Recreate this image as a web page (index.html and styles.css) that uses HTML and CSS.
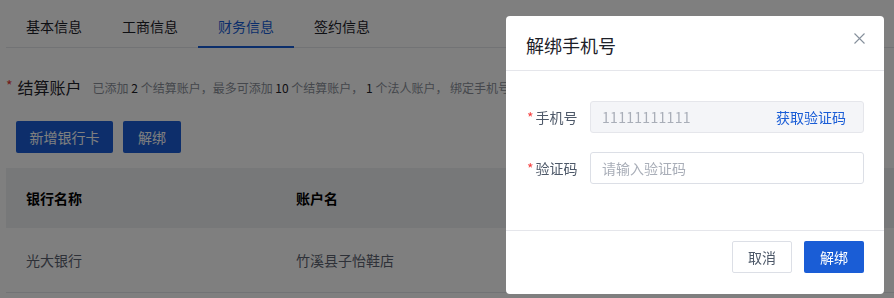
FILE: index.html
```html
<!DOCTYPE html>
<html lang="zh-CN">
<head>
<meta charset="utf-8">
<title>解绑手机号</title>
<link rel="stylesheet" href="styles.css">
</head>
<body>
<div class="page">
  <div class="tabs">
    <div class="tab">基本信息</div>
    <div class="tab">工商信息</div>
    <div class="tab active">财务信息</div>
    <div class="tab">签约信息</div>
  </div>
  <div class="section-title">
    <span class="req">*</span>
    <span class="title">结算账户</span>
    <span class="hint">已添加 <b>2</b> 个结算账户，最多可添加 <b>10</b> 个结算账户， <b>1</b> 个法人账户， 绑定手机号</span>
  </div>
  <div class="actions">
    <button class="btn primary wide">新增银行卡</button>
    <button class="btn primary narrow">解绑</button>
  </div>
  <div class="table">
    <div class="thead">
      <div class="cell">银行名称</div>
      <div class="cell">账户名</div>
      <div class="cell">开户</div>
    </div>
    <div class="trow">
      <div class="cell">光大银行</div>
      <div class="cell">竹溪县子怡鞋店</div>
      <div class="cell"></div>
    </div>
  </div>
</div>
<div class="mask"></div>
<div class="modal">
  <div class="modal-header">
    <span class="modal-title">解绑手机号</span>
    <span class="close">
      <svg width="11" height="11" viewBox="0 0 11 11"><path d="M0.5 0.5L10.5 10.5M10.5 0.5L0.5 10.5" stroke="#86909c" stroke-width="1.1" fill="none"/></svg>
    </span>
  </div>
  <div class="modal-body">
    <div class="form-row">
      <label class="label"><span class="req">*</span>手机号</label>
      <div class="input disabled">
        <span class="value">11111111111</span>
        <span class="link">获取验证码</span>
      </div>
    </div>
    <div class="form-row">
      <label class="label"><span class="req">*</span>验证码</label>
      <div class="input">
        <span class="placeholder">请输入验证码</span>
      </div>
    </div>
  </div>
  <div class="modal-footer">
    <button class="btn default">取消</button>
    <button class="btn primary">解绑</button>
  </div>
</div>
</body>
</html>
```

FILE: styles.css
```css
* { box-sizing: border-box; }
html, body { margin: 0; padding: 0; }
body {
  width: 894px;
  height: 298px;
  overflow: hidden;
  background: #fff;
  font-family: "Noto Sans CJK SC", "Noto Sans", sans-serif;
  color: #1d2129;
  font-size: 14px;
}
.page { padding: 0 0 0 6px; }
.tabs {
  display: flex;
  height: 48px;
  border-bottom: 1px solid #e5e6eb;
}
.tab {
  width: 96px;
  display: flex;
  align-items: center;
  justify-content: center;
  font-size: 14px;
  color: #1d2129;
  padding-top: 5px;
  border-bottom: 2px solid transparent;
  margin-bottom: -1px;
}
.tab.active { color: #165dd6; border-bottom-color: #165dd6; }
.section-title {
  display: flex;
  align-items: center;
  margin-top: 27px;
  height: 24px;
}
.section-title .req { color: #e53935; font-size: 14px; margin-right: 5px; position: relative; top: -2px; }
.title { font-size: 16px; color: #1d2129; margin-right: 11px; }
.hint { font-size: 12px; color: #8a8f99; white-space: nowrap; }
.hint b { color: #1d2129; font-weight: normal; }
.actions {
  display: flex;
  gap: 10px;
  padding-left: 10px;
  margin-top: 22px;
}
.btn {
  height: 32px;
  padding: 0 15px;
  font-family: inherit;
  font-size: 14px;
  border-radius: 2px;
  border: 1px solid transparent;
  cursor: pointer;
}
.btn.primary { background: #1a5dd6; color: #fff; }
.btn.default { background: #fff; color: #4e5969; border-color: #dcdfe6; }
.actions .btn { padding: 0; }
.actions .btn.wide { width: 97px; }
.actions .btn.narrow { width: 58px; }
.table { margin-top: 15px; }
.thead, .trow {
  display: grid;
  grid-template-columns: 270px 602px 1fr;
}
.thead { background: #eff0f2; height: 60px; font-weight: bold; color: #000; }
.trow { height: 65px; border-bottom: 1px solid #e5e6eb; color: #5c6370; }
.cell { display: flex; align-items: center; padding-left: 20px; white-space: nowrap; overflow: hidden; }
.mask {
  position: fixed;
  inset: 0;
  background: rgba(0, 0, 0, 0.5);
}
.modal {
  position: absolute;
  left: 506px;
  top: 16px;
  width: 378px;
  height: 278px;
  background: #fff;
  border-radius: 4px;
  display: flex;
  flex-direction: column;
}
.modal-header {
  height: 55px;
  border-bottom: 1px solid #e5e6eb;
  display: flex;
  align-items: center;
  justify-content: space-between;
  padding: 0 19px 0 20px;
}
.modal-title { font-size: 18px; color: #1d2129; padding-top: 4px; }
.close { display: flex; margin-top: -9px; }
.modal-body {
  flex: 1;
  padding: 30px 20px 0 20px;
  display: flex;
  flex-direction: column;
  gap: 19px;
}
.form-row { display: flex; align-items: center; gap: 12px; }
.label { width: 52px; font-size: 14px; color: #4e5969; white-space: nowrap; }
.label .req { color: #f53f3f; margin-right: 2px; margin-left: 1px; }
.input {
  width: 274px;
  height: 32px;
  border: 1px solid #dcdfe6;
  border-radius: 3px;
  display: flex;
  align-items: center;
  justify-content: space-between;
  padding: 0 17px 0 11px;
  font-size: 14px;
}
.input.disabled { background: #f4f5f8; border-color: #e5e6eb; }
.value { color: #a9aeb8; letter-spacing: 0.3px; }
.link { color: #1a5dd6; }
.placeholder { color: #a9aeb8; }
.modal-footer {
  height: 64px;
  border-top: 1px solid #e5e6eb;
  display: flex;
  justify-content: flex-end;
  align-items: flex-start;
  gap: 12px;
  padding: 10px 20px 0 0;
}
.modal-footer .btn { width: 60px; padding: 0; }
```
